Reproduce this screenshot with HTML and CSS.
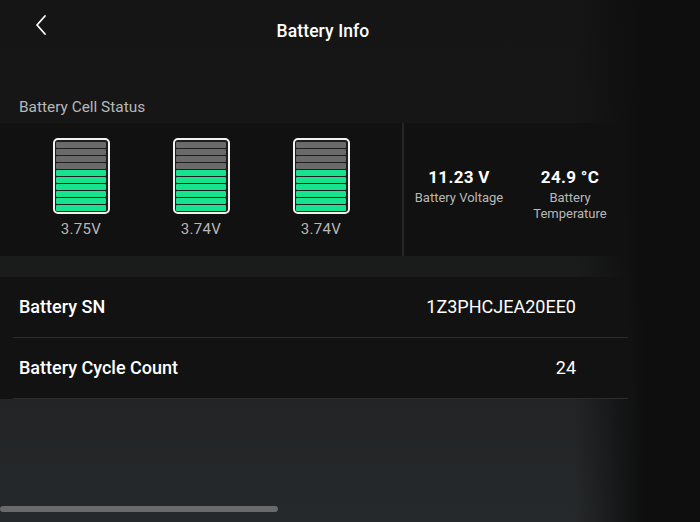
FILE: index.html
```html
<!DOCTYPE html>
<html>
<head>
<meta charset="utf-8">
<link rel="stylesheet" href="styles.css">
</head>
<body>
<div class="app">
  <div class="content">
    <header class="header">
      <button class="back" aria-label="Back">
        <svg width="14" height="22" viewBox="0 0 14 22"><path d="M11 2 L3 11 L11 20" fill="none" stroke="#fff" stroke-width="1.8" stroke-linecap="round" stroke-linejoin="round"/></svg>
      </button>
      <h1 class="title">Battery Info</h1>
    </header>

    <div class="section-label">Battery Cell Status</div>

    <section class="cell-panel">
      <div class="cells">
        <div class="cell">
          <div class="battery">
            <i class="seg off"></i><i class="seg off"></i><i class="seg off"></i><i class="seg off"></i>
            <i class="seg on"></i><i class="seg on"></i><i class="seg on"></i><i class="seg on"></i><i class="seg on"></i><i class="seg on"></i>
          </div>
          <div class="cell-v">3.75V</div>
        </div>
        <div class="cell">
          <div class="battery">
            <i class="seg off"></i><i class="seg off"></i><i class="seg off"></i><i class="seg off"></i>
            <i class="seg on"></i><i class="seg on"></i><i class="seg on"></i><i class="seg on"></i><i class="seg on"></i><i class="seg on"></i>
          </div>
          <div class="cell-v">3.74V</div>
        </div>
        <div class="cell">
          <div class="battery">
            <i class="seg off"></i><i class="seg off"></i><i class="seg off"></i><i class="seg off"></i>
            <i class="seg on"></i><i class="seg on"></i><i class="seg on"></i><i class="seg on"></i><i class="seg on"></i><i class="seg on"></i>
          </div>
          <div class="cell-v">3.74V</div>
        </div>
      </div>
      <div class="vdivider"></div>
      <div class="stats">
        <div class="stat">
          <div class="stat-value">11.23 V</div>
          <div class="stat-label">Battery Voltage</div>
        </div>
        <div class="stat">
          <div class="stat-value">24.9 °C</div>
          <div class="stat-label">Battery<br>Temperature</div>
        </div>
      </div>
    </section>

    <section class="rows">
      <div class="row"><div class="row-inner"><span class="row-label">Battery SN</span><span class="row-value">1Z3PHCJEA20EE0</span></div></div>
      <div class="row"><div class="row-inner"><span class="row-label">Battery Cycle Count</span><span class="row-value">24</span></div></div>
    </section>
  </div>
  <div class="scrollbar"></div>
</div>
</body>
</html>
```

FILE: styles.css
```css
* { box-sizing: border-box; }
html, body { margin: 0; padding: 0; }
body {
  width: 700px;
  height: 522px;
  overflow: hidden;
  font-family: Roboto, "Noto Sans", sans-serif;
  color: #fff;
  background: #151515;
}
.app {
  position: relative;
  width: 700px;
  height: 522px;
  background:
    linear-gradient(to right, rgba(14,14,14,0) 0%, rgba(14,14,14,0) 82%, rgba(14,14,14,1) 92%, #0e0e0e 100%),
    linear-gradient(to bottom, #151515 0%, #171717 40%, #222426 75%, #26292b 100%);
  display: flex;
  flex-direction: column;
}
.content {
  width: 628px;
  flex: 1;
}
.header {
  height: 62px;
  position: relative;
  width: 646px;
  display: flex;
  align-items: center;
  justify-content: center;
}
.back {
  position: absolute;
  left: 34px;
  top: 14px;
  width: 14px;
  height: 22px;
  padding: 0;
  border: 0;
  background: none;
  display: flex;
}
.title {
  margin: 0;
  font-size: 17.5px;
  font-weight: 500;
  line-height: 20px;
  letter-spacing: 0.1px;
}
.section-label {
  margin-top: 36px;
  padding-left: 19px;
  font-size: 15.4px;
  line-height: 18px;
  color: #b8b8b8;
}
.cell-panel {
  margin-top: 7px;
  height: 133px;
  background: #111111;
  display: flex;
}
.cells {
  width: 402px;
  padding-left: 21px;
  padding-top: 15px;
  display: grid;
  grid-template-columns: repeat(3, 120px);
  align-content: start;
}
.cell {
  display: flex;
  flex-direction: column;
  align-items: center;
}
.battery {
  width: 57px;
  height: 76px;
  border: 2px solid #f2f2f2;
  border-radius: 5px;
  padding: 1.5px;
  background: #1e1e1e;
  display: flex;
  flex-direction: column;
  gap: 1px;
}
.seg {
  flex: 1;
  display: block;
  border-radius: 1px;
}
.seg.off { background: #6a6a6a; }
.seg.on { background: #17e28e; }
.cell-v {
  margin-top: 6px;
  font-size: 15px;
  line-height: 18px;
  color: #b8b8b8;
  letter-spacing: 0.3px;
}
.vdivider {
  width: 2px;
  background: #262626;
}
.stats {
  flex: 1;
  display: grid;
  grid-template-columns: 110px 112px;
  padding-left: 0;
  padding-top: 44px;
  align-content: start;
}
.stat {
  text-align: center;
}
.stat-value {
  font-size: 17px;
  font-weight: 700;
  line-height: 20px;
  letter-spacing: 0.3px;
}
.stat-label {
  margin-top: 3px;
  font-size: 13px;
  line-height: 16px;
  color: #b8b8b8;
}
.rows {
  margin-top: 21px;
}
.row {
  background: #121212;
  height: 61px;
}
.row-inner {
  margin-left: 13px;
  height: 61px;
  padding-left: 6px;
  padding-right: 52px;
  border-bottom: 1px solid #2c2c2c;
  display: flex;
  align-items: center;
  justify-content: space-between;
  font-size: 18px;
  line-height: 20px;
}
.row-label { font-weight: 500; }
.row-value { font-weight: 400; letter-spacing: 0; }
.scrollbar {
  position: absolute;
  left: 0;
  top: 506px;
  width: 278px;
  height: 6px;
  border-radius: 3px;
  background: #6a6a6a;
}
```
